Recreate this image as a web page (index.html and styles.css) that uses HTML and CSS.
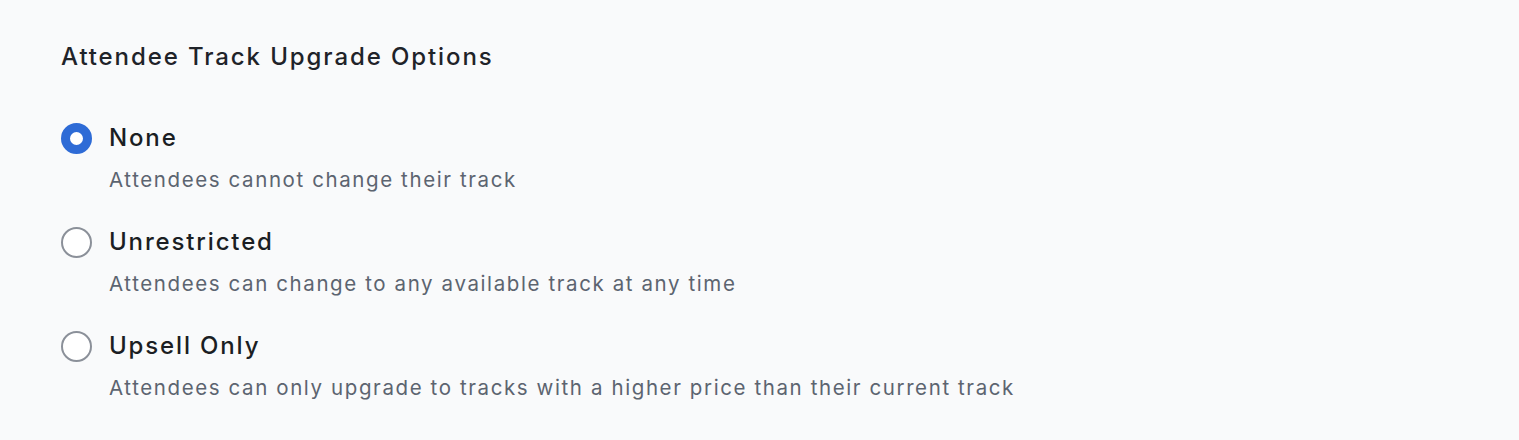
FILE: index.html
```html
<!DOCTYPE html>
<html lang="en">
<head>
<meta charset="utf-8">
<title>Attendee Track Upgrade Options</title>
<link rel="stylesheet" href="styles.css">
</head>
<body>
<section class="panel">
  <h2 class="title">Attendee Track Upgrade Options</h2>
  <div class="options">
    <label class="option">
      <span class="radio radio--checked"></span>
      <span class="option-label">None</span>
      <span class="option-desc">Attendees cannot change their track</span>
    </label>
    <label class="option">
      <span class="radio"></span>
      <span class="option-label">Unrestricted</span>
      <span class="option-desc">Attendees can change to any available track at any time</span>
    </label>
    <label class="option">
      <span class="radio"></span>
      <span class="option-label">Upsell Only</span>
      <span class="option-desc">Attendees can only upgrade to tracks with a higher price than their current track</span>
    </label>
  </div>
</section>
</body>
</html>
```
FILE: styles.css
```css
* { box-sizing: border-box; }
html, body {
  margin: 0;
  background: #f9fafb;
}
body {
  font-family: Inter, "Noto Sans", "Liberation Sans", sans-serif;
  color: #1d2025;
}
.panel {
  padding: 41px 61px 0;
}
.title {
  margin: 0;
  font-size: 24px;
  line-height: 32px;
  font-weight: 500;
  letter-spacing: 1.9px;
  color: #1f2329;
}
.options {
  margin-top: 49px;
  display: flex;
  flex-direction: column;
  gap: 32px;
}
.option {
  display: grid;
  grid-template-columns: 32px 1fr;
  column-gap: 16px;
  row-gap: 12px;
  align-items: center;
}
.radio {
  width: 31px;
  height: 31px;
  border-radius: 50%;
  border: 2px solid #8b9099;
  background: #ffffff;
}
.radio--checked {
  border: 9px solid #2e6bd6;
}
.option-label {
  font-size: 24px;
  line-height: 32px;
  font-weight: 500;
  letter-spacing: 1.85px;
  color: #1b1e23;
}
.option-desc {
  grid-column: 2;
  font-size: 20.5px;
  line-height: 28px;
  letter-spacing: 1.6px;
  color: #5c6470;
}
```
